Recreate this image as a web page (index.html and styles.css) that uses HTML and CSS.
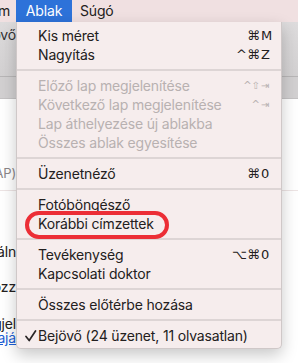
FILE: index.html
```html
<!DOCTYPE html>
<html lang="hu">
<head>
<meta charset="utf-8"/>
<title>Ablak menü</title>
<meta content="width=device-width, initial-scale=1.0" name="viewport"/>
<link rel="stylesheet" href="styles.css">
</head>
<body>
<div class="screen">
  <div class="menubar">
    <div class="clip"><span>Formátum</span></div>
    <div class="mb-item active">Ablak</div>
    <div class="mb-item">Súgó</div>
  </div>

  <div class="window">
    <div class="toolbar">
      <div class="row"><div class="clip"><span>Bejövő</span></div></div>
    </div>
    <div class="tabbar"></div>
    <div class="content">
      <div class="acct">
        <div class="row muted"><div class="clip"><span>Fiókok (IMAP)</span></div></div>
      </div>
      <div class="lines">
        <div class="row l1"><div class="clip"><span>Új áln</span></div><span>év</span></div>
        <div class="row l2"><div class="clip"><span>Mappa hozz</span></div><span>áadása</span></div>
        <div class="row l3"><div class="clip"><span>Megjel</span></div><span>enítés</span></div>
        <div class="row l4 link"><div class="clip"><span>Tovább ajá</span></div><span>nlott</span></div>
      </div>
    </div>
  </div>

  <div class="menu">
    <div class="item"><span class="label">Kis méret</span><span class="sc"><span class="mods">⌘</span><span class="key">M</span></span></div>
    <div class="item"><span class="label">Nagyítás</span><span class="sc"><span class="mods">^⌘</span><span class="key">Z</span></span></div>
    <div class="sep"></div>
    <div class="item off"><span class="label">Előző lap megjelenítése</span><span class="sc"><span class="mods">^⇧</span><span class="key">⇥</span></span></div>
    <div class="item off"><span class="label">Következő lap megjelenítése</span><span class="sc"><span class="mods">^</span><span class="key">⇥</span></span></div>
    <div class="item off"><span class="label">Lap áthelyezése új ablakba</span></div>
    <div class="item off"><span class="label">Összes ablak egyesítése</span></div>
    <div class="sep"></div>
    <div class="item"><span class="label">Üzenetnéző</span><span class="sc"><span class="mods">⌘</span><span class="key">0</span></span></div>
    <div class="sep"></div>
    <div class="item"><span class="label">Fotóböngésző</span></div>
    <div class="item"><span class="label">Korábbi címzettek</span><span class="ring"></span></div>
    <div class="sep"></div>
    <div class="item"><span class="label">Tevékenység</span><span class="sc"><span class="mods">⌥⌘</span><span class="key">0</span></span></div>
    <div class="item"><span class="label">Kapcsolati doktor</span></div>
    <div class="sep"></div>
    <div class="item"><span class="label">Összes előtérbe hozása</span></div>
    <div class="sep"></div>
    <div class="item">
      <svg class="check" width="12" height="12" viewBox="0 0 12 12"><path d="M1 6.5 L4.2 10.5 L10.5 1" fill="none" stroke="#2a2626" stroke-width="1.7" stroke-linecap="round" stroke-linejoin="round"/></svg>
      <span class="label">Bejövő (24 üzenet, 11 olvasatlan)</span>
    </div>
  </div>
</div>
</body>
</html>
```

FILE: styles.css
```css
body {
  margin: 0;
  font-family: Inter, 'DejaVu Sans', sans-serif;
  font-size: 14px;
  letter-spacing: -0.17px;
  color: #232020;
  background: #fff;
}
.screen {
  position: relative;
  width: 298px;
  height: 363px;
  overflow: hidden;
}

/* a line whose start lies off the left edge: the clip holds the part before x=16 */
.row {
  display: flex;
  white-space: nowrap;
  height: 16px;
  line-height: 16px;
}
.clip {
  flex: none;
  width: 16px;
  display: flex;
  justify-content: flex-end;
  white-space: nowrap;
}

.menubar {
  height: 22px;
  display: flex;
  background: #f0e0e1;
}
.menubar .clip {
  width: 10px;
  padding-right: 6px;
  line-height: 22px;
  overflow: hidden;
}
.mb-item {
  height: 22px;
  line-height: 22px;
  padding: 0 8px;
}
.mb-item.active {
  flex: none;
  width: 56px;
  padding: 0;
  text-align: center;
  background: #2d72d9;
  color: #fff;
}

.window { background: #fff; }
.toolbar {
  height: 55px;
  padding-top: 5px;
  box-sizing: border-box;
  background: linear-gradient(#dddbdc, #d3d1d2);
  border-bottom: 1px solid #b8b6b7;
  color: #333;
}
.tabbar {
  height: 21px;
  background: #d2d0d1;
  border-bottom: 1px solid #c4c2c3;
}
.acct {
  height: 92px;
  box-sizing: border-box;
  padding-top: 66px;
  border-bottom: 1px solid #ede4e4;
}
.muted { color: #8a8687; font-size: 13px; }
.lines {
  display: flex;
  flex-direction: column;
  padding-top: 53px;
}
.l2 { margin-top: 19px; }
.l3 { margin-top: 21px; }
.l4 { margin-top: -2px; }
.link {
  color: #1c5fd6;
  text-decoration: underline;
}

.menu {
  position: absolute;
  top: 22px;
  left: 16px;
  width: 266px;
  padding: 4px 0 3px;
  background: #f6eded;
  border: 1px solid #cfc8c8;
  border-top: none;
  border-radius: 0 0 5px 5px;
  box-shadow: 0 6px 16px rgba(0,0,0,0.22);
  box-sizing: border-box;
}
.item {
  position: relative;
  height: 19px;
  display: flex;
  align-items: center;
  padding: 0 7px 0 21px;
}
.item .label { flex: 1; white-space: nowrap; }
.item.off { color: #b8b1b1; }
.sc {
  display: flex;
  font-family: 'DejaVu Sans', sans-serif;
  font-size: 13px;
  letter-spacing: 0;
}
.mods { text-align: right; }
.key { width: 13px; padding-left: 1px; }
.item.off .sc { font-size: 10px; }
.sep {
  height: 2px;
  margin: 5px 0;
  background: #ddd5d5;
}
.check {
  position: absolute;
  left: 8px;
  top: 4px;
}
.ring {
  position: absolute;
  left: 8px;
  top: -3px;
  width: 144px;
  height: 28px;
  border: 4px solid #ec2e36;
  border-radius: 14px;
  box-sizing: border-box;
}
```
